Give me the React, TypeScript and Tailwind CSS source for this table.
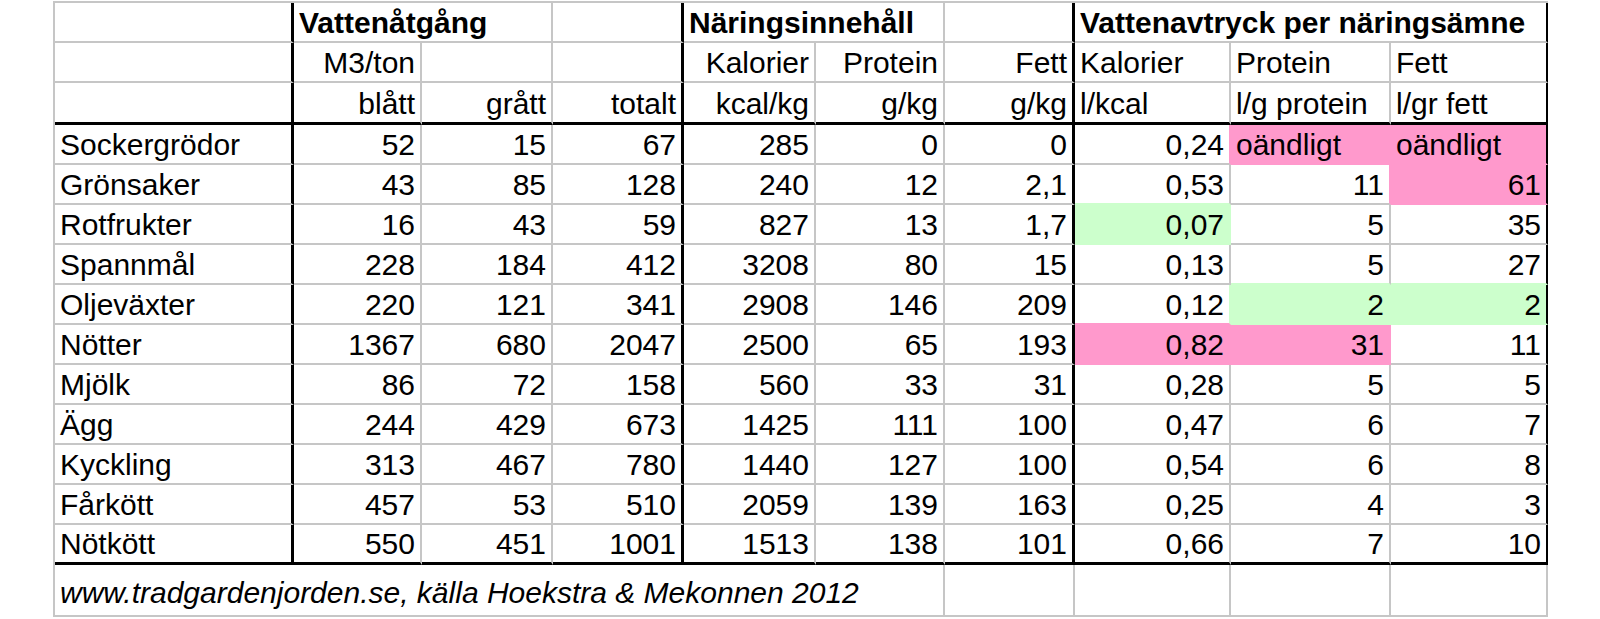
import React from "react";

type Fill = "pink" | "green" | null;

const widths = [239, 128, 131, 131, 132, 129, 130, 156, 160, 157];

const rows: string[][] = [
  ["Sockergrödor", "52", "15", "67", "285", "0", "0", "0,24", "oändligt", "oändligt"],
  ["Grönsaker", "43", "85", "128", "240", "12", "2,1", "0,53", "11", "61"],
  ["Rotfrukter", "16", "43", "59", "827", "13", "1,7", "0,07", "5", "35"],
  ["Spannmål", "228", "184", "412", "3208", "80", "15", "0,13", "5", "27"],
  ["Oljeväxter", "220", "121", "341", "2908", "146", "209", "0,12", "2", "2"],
  ["Nötter", "1367", "680", "2047", "2500", "65", "193", "0,82", "31", "11"],
  ["Mjölk", "86", "72", "158", "560", "33", "31", "0,28", "5", "5"],
  ["Ägg", "244", "429", "673", "1425", "111", "100", "0,47", "6", "7"],
  ["Kyckling", "313", "467", "780", "1440", "127", "100", "0,54", "6", "8"],
  ["Fårkött", "457", "53", "510", "2059", "139", "163", "0,25", "4", "3"],
  ["Nötkött", "550", "451", "1001", "1513", "138", "101", "0,66", "7", "10"],
];

const fills: Record<string, Fill> = {
  "0-8": "pink",
  "0-9": "pink",
  "1-9": "pink",
  "2-7": "green",
  "4-8": "green",
  "4-9": "green",
  "5-7": "pink",
  "5-8": "pink",
};

const fillAt = (r: number, c: number): Fill => fills[`${r}-${c}`] ?? null;

function rightBorder(r: number, c: number): string {
  if (c === 0 || c === 3 || c === 6) return "border-r-[3px] border-r-black";
  if (c === 9) return "border-r-2 border-r-black";
  const f = fillAt(r, c) ?? fillAt(r, c + 1);
  if (f === "pink") return "border-r-2 border-r-[#ff99cc]";
  if (f === "green") return "border-r-2 border-r-[#ccffcc]";
  return "border-r-2 border-r-[#c6c6c6]";
}

function bottomBorder(r: number, c: number): string {
  if (r === 10) return "border-b-[3px] border-b-black";
  const f = fillAt(r, c) ?? fillAt(r + 1, c);
  if (f === "pink") return "border-b-2 border-b-[#ff99cc]";
  if (f === "green") return "border-b-2 border-b-[#ccffcc]";
  return "border-b-2 border-b-[#c6c6c6]";
}

function bg(f: Fill): string {
  if (f === "pink") return "bg-[#ff99cc]";
  if (f === "green") return "bg-[#ccffcc]";
  return "bg-white";
}

const cellBase = "flex items-end px-[5px] pb-[1px] leading-[34px] whitespace-nowrap overflow-visible";
const gridB = "border-b-2 border-b-[#c6c6c6]";
const gridR = "border-r-2 border-r-[#c6c6c6]";
const thickR = "border-r-[3px] border-r-black";
const thickB = "border-b-[3px] border-b-black";
const edgeR = "border-r-2 border-r-black";

export default function App() {
  return (
    <div
      className="w-[1600px] h-[619px] bg-white text-black pl-[53px] pt-[1px] overflow-hidden"
      style={{ fontFamily: '"Liberation Sans", Arial, sans-serif' }}
    >
      <div
        className="grid border-t-2 border-l-2 border-[#c6c6c6] w-[1495px] text-[30px]"
        style={{ gridTemplateColumns: widths.map((w) => `${w}px`).join(" ") }}
      >
        {/* Header row 1 */}
        <div className={`${cellBase} h-[40px] ${gridB} ${thickR}`} />
        <div className={`${cellBase} col-span-2 h-[40px] font-bold ${gridB} ${gridR}`}>Vattenåtgång</div>
        <div className={`${cellBase} h-[40px] ${gridB} ${thickR}`} />
        <div className={`${cellBase} col-span-2 h-[40px] font-bold ${gridB} ${gridR}`}>Näringsinnehåll</div>
        <div className={`${cellBase} h-[40px] ${gridB} ${thickR}`} />
        <div className={`${cellBase} col-span-3 h-[40px] font-bold ${gridB} ${edgeR}`}>
          Vattenavtryck per näringsämne
        </div>

        {/* Header row 2 */}
        <div className={`${cellBase} h-[40px] ${gridB} ${thickR}`} />
        <div className={`${cellBase} justify-end h-[40px] ${gridB} ${gridR}`}>M3/ton</div>
        <div className={`${cellBase} h-[40px] ${gridB} ${gridR}`} />
        <div className={`${cellBase} h-[40px] ${gridB} ${thickR}`} />
        <div className={`${cellBase} justify-end h-[40px] ${gridB} ${gridR}`}>Kalorier</div>
        <div className={`${cellBase} justify-end h-[40px] ${gridB} ${gridR}`}>Protein</div>
        <div className={`${cellBase} justify-end h-[40px] ${gridB} ${thickR}`}>Fett</div>
        <div className={`${cellBase} h-[40px] ${gridB} ${gridR}`}>Kalorier</div>
        <div className={`${cellBase} h-[40px] ${gridB} ${gridR}`}>Protein</div>
        <div className={`${cellBase} h-[40px] ${gridB} ${edgeR}`}>Fett</div>

        {/* Header row 3 */}
        <div className={`${cellBase} h-[42px] ${thickB} ${thickR}`} />
        <div className={`${cellBase} justify-end h-[42px] ${thickB} ${gridR}`}>blått</div>
        <div className={`${cellBase} justify-end h-[42px] ${thickB} ${gridR}`}>grått</div>
        <div className={`${cellBase} justify-end h-[42px] ${thickB} ${thickR}`}>totalt</div>
        <div className={`${cellBase} justify-end h-[42px] ${thickB} ${gridR}`}>kcal/kg</div>
        <div className={`${cellBase} justify-end h-[42px] ${thickB} ${gridR}`}>g/kg</div>
        <div className={`${cellBase} justify-end h-[42px] ${thickB} ${thickR}`}>g/kg</div>
        <div className={`${cellBase} h-[42px] ${thickB} ${gridR}`}>l/kcal</div>
        <div className={`${cellBase} h-[42px] ${thickB} ${gridR}`}>l/g protein</div>
        <div className={`${cellBase} h-[42px] ${thickB} ${edgeR}`}>l/gr fett</div>

        {/* Data rows */}
        {rows.map((row, r) =>
          row.map((v, c) => {
            const f = fillAt(r, c);
            const left = c === 0 || v === "oändligt";
            return (
              <div
                key={`${r}-${c}`}
                className={`${cellBase} h-[40px] ${left ? "justify-start" : "justify-end"} ${bg(f)} ${rightBorder(r, c)} ${bottomBorder(r, c)}`}
              >
                {v}
              </div>
            );
          })
        )}

        {/* Footer */}
        <div className={`${cellBase} col-span-6 h-[52px] italic pb-[5px] ${gridB} ${gridR}`}>
          www.tradgardenjorden.se, källa Hoekstra &amp; Mekonnen 2012
        </div>
        <div className={`${cellBase} h-[52px] ${gridB} ${gridR}`} />
        <div className={`${cellBase} h-[52px] ${gridB} ${gridR}`} />
        <div className={`${cellBase} h-[52px] ${gridB} ${gridR}`} />
        <div className={`${cellBase} h-[52px] ${gridB} ${gridR}`} />
      </div>
    </div>
  );
}
